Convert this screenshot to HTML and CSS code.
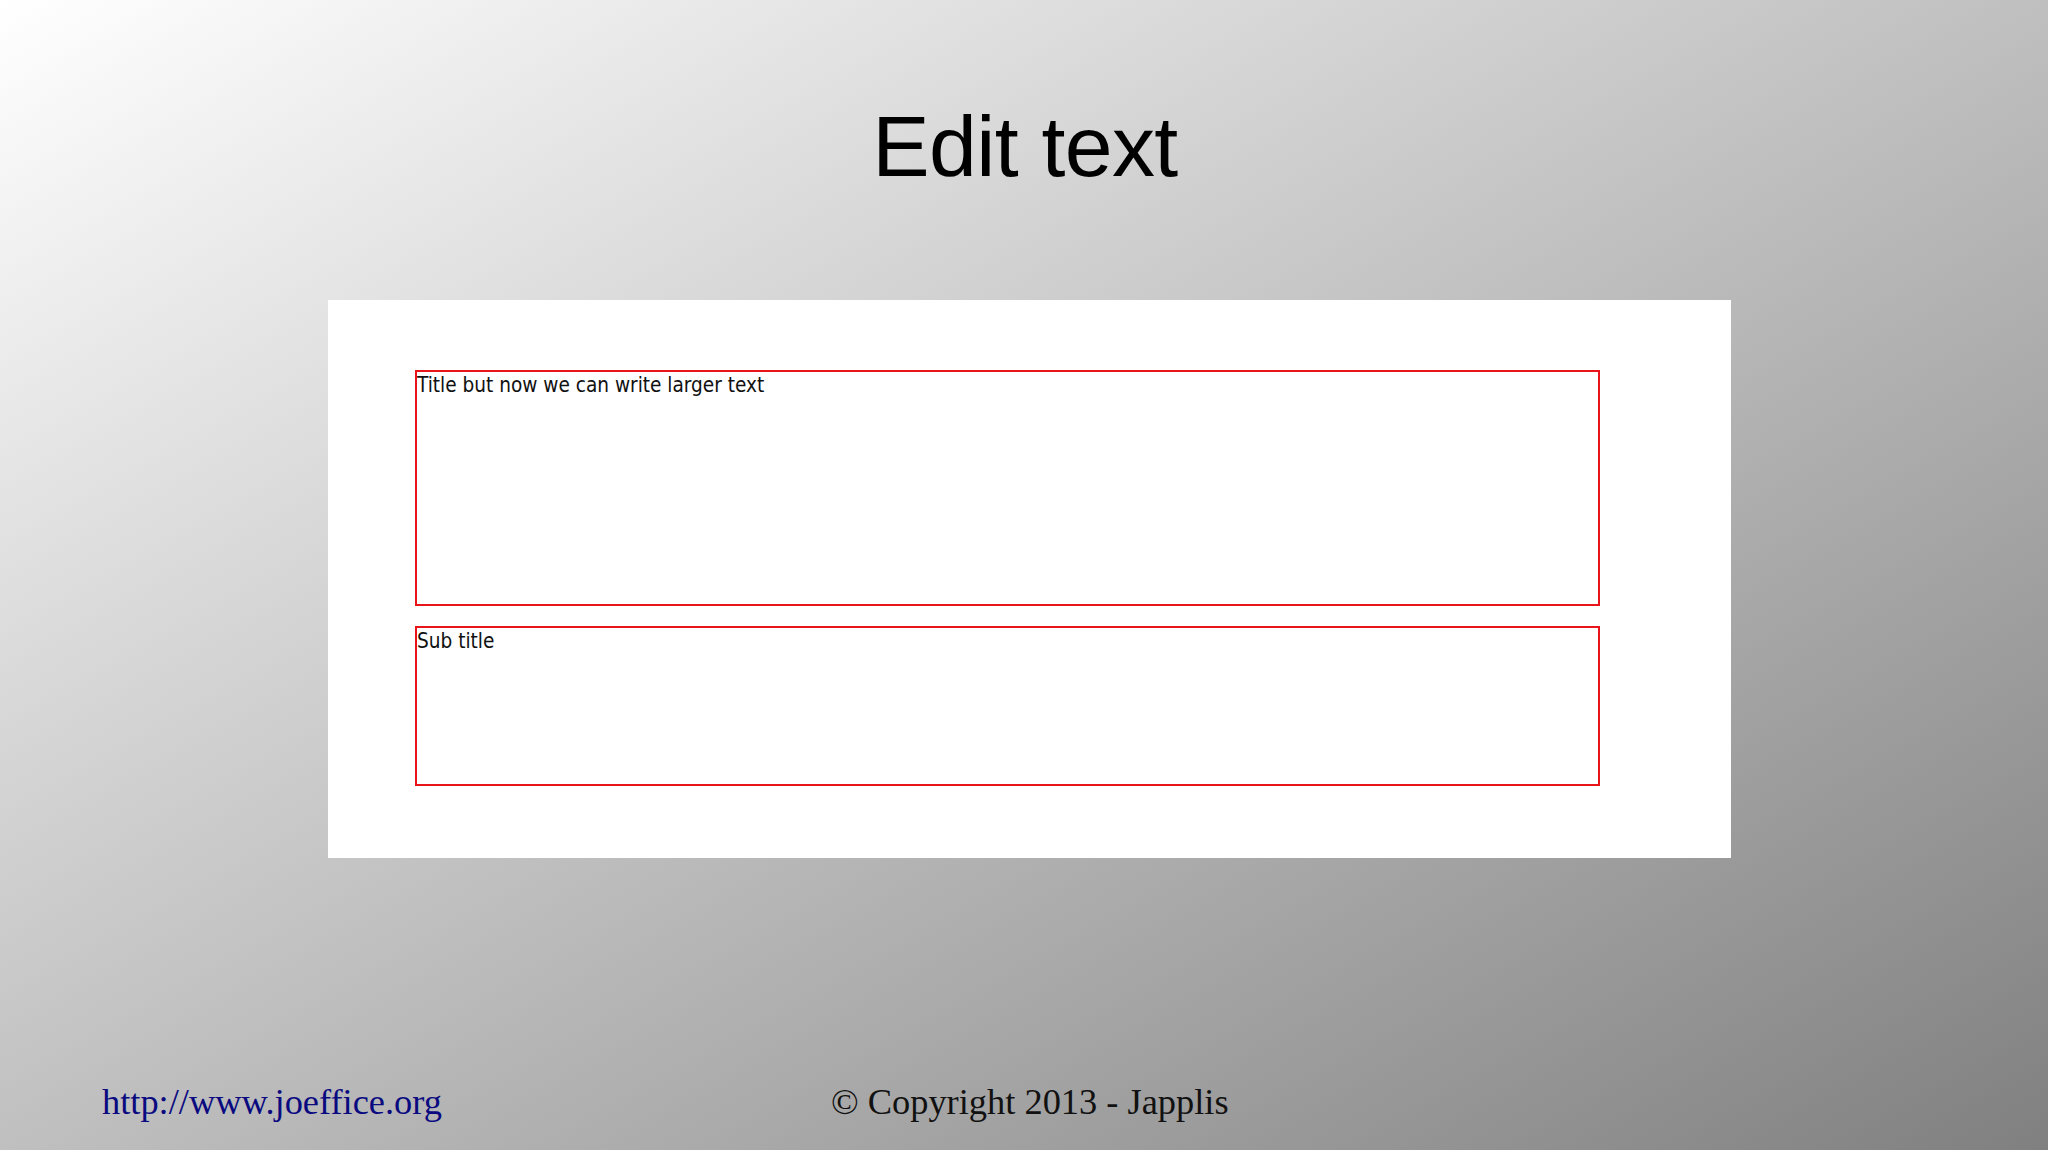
FILE: index.html
```html
<!DOCTYPE html>
<html lang="en">
<head>
<meta charset="utf-8">
<title>Edit text</title>
<link rel="stylesheet" href="styles.css">
</head>
<body>
<div class="slide">
  <h1 class="slide-title">Edit text</h1>
  <div class="panel">
    <div class="field field-title">Title but now we can write larger text</div>
    <div class="field field-sub">Sub title</div>
  </div>
  <footer class="slide-footer">
    <span class="footer-link">http://www.joeffice.org</span>
    <span class="footer-copy">© Copyright 2013 - Japplis</span>
  </footer>
</div>
</body>
</html>
```
FILE: styles.css
```css
html, body {
  margin: 0;
  padding: 0;
}

body {
  width: 2048px;
  height: 1150px;
  overflow: hidden;
}

.slide {
  width: 2048px;
  height: 1150px;
  background: linear-gradient(to bottom right, #ffffff 0%, #808080 100%);
  display: flex;
  flex-direction: column;
}

.slide-title {
  margin: 98px 0 0 0;
  font-family: "Liberation Sans", Arial, sans-serif;
  font-weight: normal;
  font-size: 86px;
  letter-spacing: -0.6px;
  line-height: 96px;
  color: #000;
  text-align: center;
  padding-left: 2px;
}

.panel {
  margin: 106px 0 0 328px;
  width: 1403px;
  height: 558px;
  box-sizing: border-box;
  background: #fff;
  padding: 70px 131px 0 87px;
  display: flex;
  flex-direction: column;
  gap: 20px;
}

.field {
  box-sizing: border-box;
  border: 2px solid #e8141a;
  padding: 2px 0 0 0;
  font-family: "DejaVu Sans Condensed", "DejaVu Sans", sans-serif;
  font-size: 20.6px;
  line-height: 23px;
  color: #111;
}

.field-title {
  height: 236px;
}

.field-sub {
  height: 160px;
}

.slide-footer {
  margin-top: 224px;
  padding-left: 102px;
  display: grid;
  grid-template-columns: 729px auto;
  font-family: "Liberation Serif", "Times New Roman", serif;
  font-size: 36.4px;
  line-height: 40px;
}

.footer-link {
  color: #0a0a80;
}

.footer-copy {
  color: #111;
}
```
